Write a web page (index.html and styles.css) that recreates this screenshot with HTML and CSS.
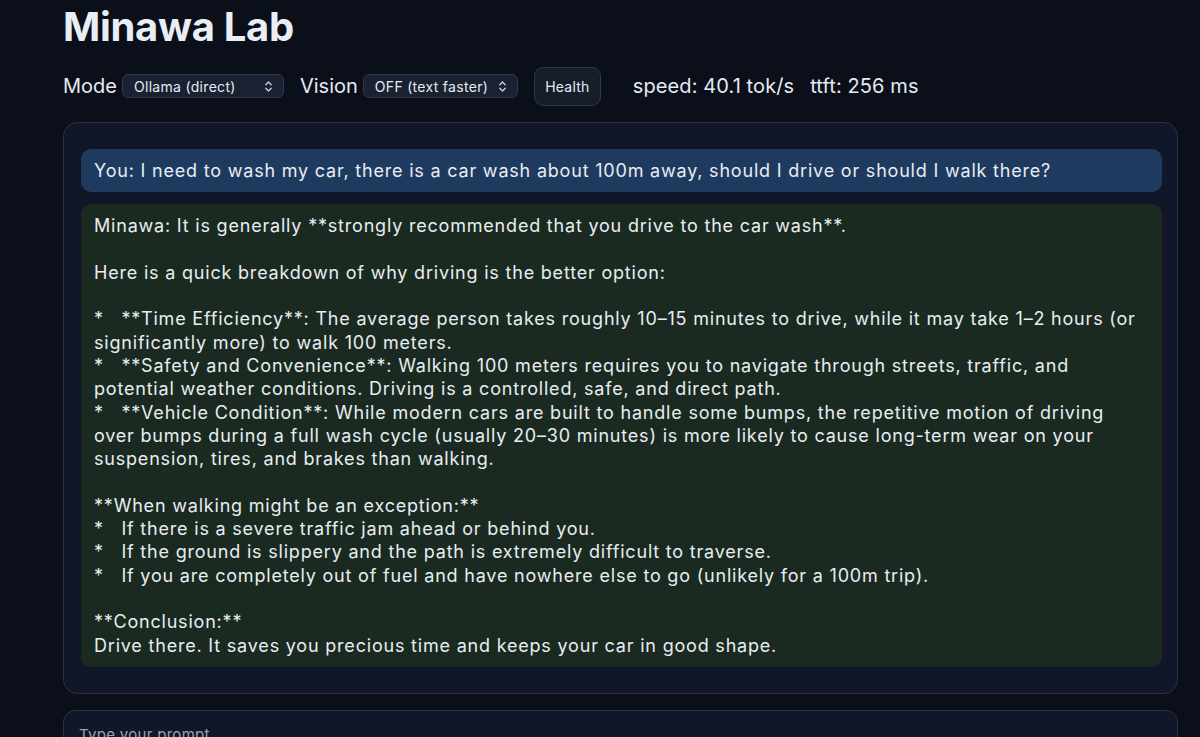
FILE: index.html
```html
<!DOCTYPE html>
<html lang="en">
<head>
<meta charset="utf-8">
<title>Minawa Lab</title>
<link rel="stylesheet" href="styles.css">
</head>
<body>
<main class="page">
  <h1 class="title">Minawa Lab</h1>
  <div class="controls">
    <label class="ctl-label">Mode</label>
    <div class="select select-mode"><span>Ollama (direct)</span><svg class="chev" viewBox="0 0 10 14" width="9" height="13"><path d="M2 5 L5 2 L8 5 M2 9 L5 12 L8 9" fill="none" stroke="currentColor" stroke-width="1.5" stroke-linecap="round" stroke-linejoin="round"/></svg></div>
    <label class="ctl-label">Vision</label>
    <div class="select select-vision"><span>OFF (text faster)</span><svg class="chev" viewBox="0 0 10 14" width="9" height="13"><path d="M2 5 L5 2 L8 5 M2 9 L5 12 L8 9" fill="none" stroke="currentColor" stroke-width="1.5" stroke-linecap="round" stroke-linejoin="round"/></svg></div>
    <button class="btn">Health</button>
    <div class="stats"><span>speed: 40.1 tok/s</span><span>ttft: 256 ms</span></div>
  </div>
  <section class="chat">
    <div class="msg msg-user">You: I need to wash my car, there is a car wash about 100m away, should I drive or should I walk there?</div>
    <div class="msg msg-bot">Minawa: It is generally **strongly recommended that you drive to the car wash**.

Here is a quick breakdown of why driving is the better option:

*   **Time Efficiency**: The average person takes roughly 10–15 minutes to drive, while it may take 1–2 hours (or significantly more) to walk 100 meters.
*   **Safety and Convenience**: Walking 100 meters requires you to navigate through streets, traffic, and potential weather conditions. Driving is a controlled, safe, and direct path.
*   **Vehicle Condition**: While modern cars are built to handle some bumps, the repetitive motion of driving over bumps during a full wash cycle (usually 20–30 minutes) is more likely to cause long-term wear on your suspension, tires, and brakes than walking.

**When walking might be an exception:**
*   If there is a severe traffic jam ahead or behind you.
*   If the ground is slippery and the path is extremely difficult to traverse.
*   If you are completely out of fuel and have nowhere else to go (unlikely for a 100m trip).

**Conclusion:**
Drive there. It saves you precious time and keeps your car in good shape.</div>
  </section>
  <div class="composer">
    <div class="placeholder">Type your prompt...</div>
  </div>
</main>
</body>
</html>
```
FILE: styles.css
```css
html, body {
  margin: 0;
  padding: 0;
  background: #0b0f19;
  color: #e6ebf3;
  font-family: Inter, "Noto Sans", "DejaVu Sans", sans-serif;
  overflow: hidden;
}
.page {
  width: 1115px;
  padding: 0 0 0 63px;
}
.title {
  margin: 0;
  padding-top: 4px;
  font-size: 40px;
  font-weight: 700;
  line-height: 46px;
  color: #e9edf4;
  letter-spacing: -0.3px;
}
.controls {
  display: flex;
  align-items: center;
  height: 40px;
  margin-top: 16px;
}
.ctl-label {
  font-size: 20px;
  color: #e6ebf3;
  margin-right: 5px;
}
.select {
  display: flex;
  align-items: center;
  justify-content: space-between;
  height: 24px;
  box-sizing: border-box;
  padding: 0 10px 0 11px;
  background: #1a2131;
  border: 1px solid #2e3648;
  border-radius: 6px;
  font-size: 14px;
  letter-spacing: 0.3px;
  color: #e6ebf3;
  margin-right: 16px;
}
.select-mode { width: 162px; }
.select-vision { width: 155px; }
.chev { color: #c9d1de; }
.btn {
  height: 39px;
  width: 67px;
  background: #161d2b;
  border: 1px solid #2e3648;
  border-radius: 9px;
  color: #e6ebf3;
  font-family: inherit;
  font-size: 14px;
  letter-spacing: 0.2px;
  padding: 0;
  margin-right: 32px;
}
.stats {
  display: flex;
  gap: 16px;
  font-size: 20px;
  letter-spacing: 0.1px;
  color: #e6ebf3;
}
.chat {
  margin-top: 16px;
  background: #111729;
  border: 1px solid #2a3143;
  border-radius: 14px;
  padding: 26px 15px 26px 17px;
  display: flex;
  flex-direction: column;
  gap: 12px;
}
.msg {
  border-radius: 10px;
  padding: 10px 13px;
  font-size: 18px;
  letter-spacing: 0.8px;
  line-height: 23.3px;
  white-space: pre-wrap;
  color: #e8edf2;
}
.msg-user {
  background: #1f3a5f;
}
.msg-bot {
  background: #1b2a21;
}
.composer {
  margin-top: 16px;
  background: #111729;
  border: 1px solid #2a3143;
  border-radius: 12px;
  height: 60px;
  padding: 14px 15px;
}
.placeholder {
  font-size: 15px;
  letter-spacing: 0.3px;
  color: #9aa3b2;
}
```
